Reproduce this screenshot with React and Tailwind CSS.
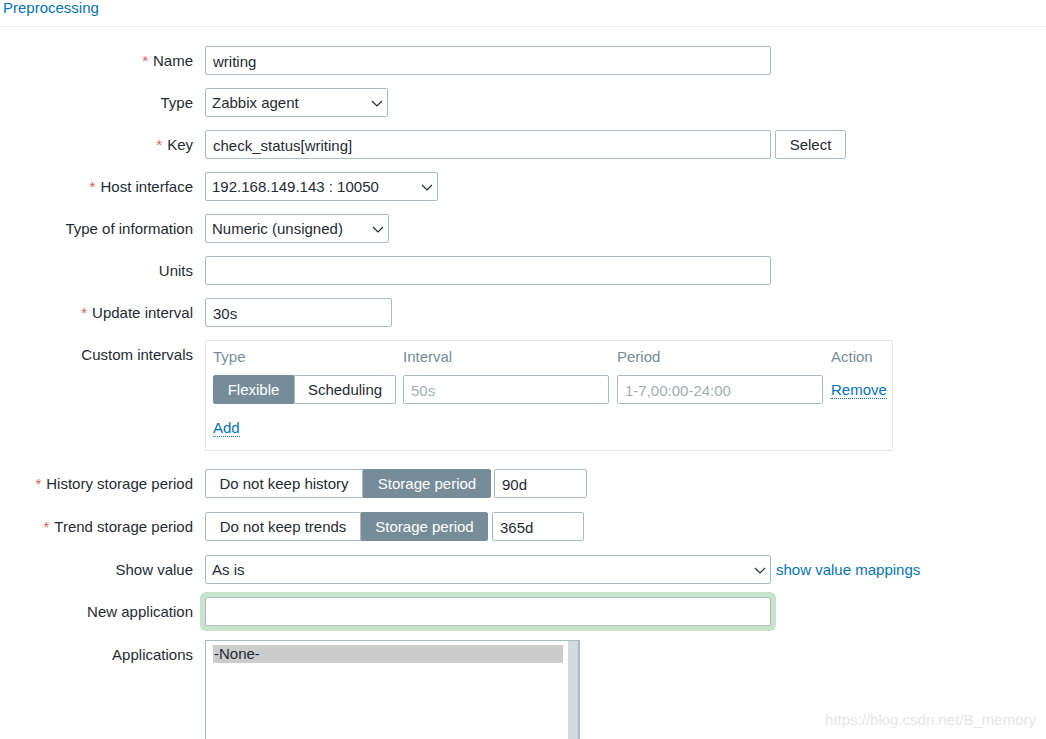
import clsx from 'clsx';

function Chevron() {
  return (
    <svg width="12" height="7" viewBox="0 0 12 7" className="shrink-0">
      <path d="M1 1l5 5 5-5" fill="none" stroke="#1f2c33" strokeWidth="1.2" />
    </svg>
  );
}

function Row({ label, required, className, children }) {
  return (
    <div className={clsx('flex items-start', className)}>
      <div className="w-[193px] shrink-0 text-right leading-[29px] whitespace-nowrap">
        {required && <span className="text-[#e45959] mr-[5px]">*</span>}
        {label}
      </div>
      <div className="ml-3 flex items-center">{children}</div>
    </div>
  );
}

function Input({ value, width, className }) {
  return (
    <div className={clsx('shrink-0 h-[29px] border border-[#acbbc2] rounded-[2px] bg-white px-[7px] leading-[29px] whitespace-nowrap', width, className)}>
      {value}
    </div>
  );
}

function Select({ value, width }) {
  return (
    <div className={clsx('shrink-0 h-[29px] border border-[#acbbc2] rounded-[2px] bg-white pl-[6px] pr-[4px] pt-px flex items-center justify-between', width)}>
      <span>{value}</span>
      <Chevron />
    </div>
  );
}

function Segmented({ items, active, widths }) {
  return (
    <div className="flex h-[29px] shrink-0">
      {items.map((it, i) => (
        <div
          key={it}
          className={clsx(
            'flex items-center justify-center border whitespace-nowrap pt-px',
            widths[i],
            i === 0 ? 'rounded-l-[2px]' : 'rounded-r-[2px]',
            i === active ? 'bg-[#768d99] border-[#768d99] text-white' : 'bg-white border-[#acbbc2] text-[#1f2c33]'
          )}
        >
          {it}
        </div>
      ))}
    </div>
  );
}

function Link({ children, className }) {
  return <span className={clsx('text-[#0275b8] border-b border-dotted border-[#0275b8] leading-[17px]', className)}>{children}</span>;
}

export default function App() {
  return (
    <div className="relative h-[739px] w-[1046px] overflow-hidden bg-white text-[15px] text-[#1f2c33] font-['Liberation_Sans',Arial,sans-serif]">
      <div className="h-[27px] border-b border-[#ebeef0] pl-[3px] leading-[16px] text-[#0275b8]">Preprocessing</div>

      <div className="pt-[19px] flex flex-col gap-[13px]">
        <Row label="Name" required>
          <Input value="writing" width="w-[566px]" />
        </Row>
        <Row label="Type">
          <Select value="Zabbix agent" width="w-[183px]" />
        </Row>
        <Row label="Key" required>
          <Input value="check_status[writing]" width="w-[566px]" />
          <div className="ml-1 h-[29px] w-[71px] pt-px border border-[#acbbc2] rounded-[2px] flex items-center justify-center">Select</div>
        </Row>
        <Row label="Host interface" required>
          <Select value="192.168.149.143 : 10050" width="w-[233px]" />
        </Row>
        <Row label="Type of information">
          <Select value="Numeric (unsigned)" width="w-[184px]" />
        </Row>
        <Row label="Units">
          <Input value="" width="w-[566px]" />
        </Row>
        <Row label="Update interval" required>
          <Input value="30s" width="w-[187px]" />
        </Row>
        <Row label="Custom intervals">
          <div className="w-[688px] h-[111px] border border-[#e3e8eb] pt-[7px] px-[7px]">
            <div className="flex leading-[18px] text-[#768d99]">
              <div className="w-[190px]">Type</div>
              <div className="w-[214px]">Interval</div>
              <div className="w-[214px]">Period</div>
              <div>Action</div>
            </div>
            <div className="mt-[9px] flex items-center">
              <Segmented items={['Flexible', 'Scheduling']} active={0} widths={['w-[81px]', 'w-[102px]']} />
              <Input value="50s" width="w-[206px]" className="ml-[7px] text-[#a3adb2]" />
              <Input value="1-7,00:00-24:00" width="w-[206px]" className="ml-2 text-[#a3adb2]" />
              <Link className="ml-2 mt-px whitespace-nowrap">Remove</Link>
            </div>
            <div className="mt-[13px]">
              <Link>Add</Link>
            </div>
          </div>
        </Row>
        <Row label="History storage period" required className="mt-[5px]">
          <Segmented items={['Do not keep history', 'Storage period']} active={1} widths={['w-[158px]', 'w-[128px]']} />
          <Input value="90d" width="w-[93px]" className="ml-[3px]" />
        </Row>
        <Row label="Trend storage period" required className="mt-px">
          <Segmented items={['Do not keep trends', 'Storage period']} active={1} widths={['w-[156px]', 'w-[127px]']} />
          <Input value="365d" width="w-[92px]" className="ml-1" />
        </Row>
        <Row label="Show value" className="mt-px">
          <Select value="As is" width="w-[566px]" />
          <span className="ml-[5px] mt-[2px] text-[#0275b8]">show value mappings</span>
        </Row>
        <Row label="New application">
          <Input value="" width="w-[566px]" className="shadow-[0_0_0_5px_#c6e4c9]" />
        </Row>
        <Row label="Applications" className="mt-px">
          <div className="w-[375px] h-[140px] border border-[#acbbc2] border-r-0 flex">
            <div className="flex-1 pt-1 pl-[7px] pr-[5px]">
              <div className="bg-[#cccccc] leading-[18px] pl-[1px]">-None-</div>
            </div>
            <div className="w-[12px] bg-[#d2dadf] border-r-2 border-[#acbbc2]" />
          </div>
        </Row>
      </div>

      <div className="absolute right-[10px] bottom-[10px] text-[15px] leading-[18px] text-[#e6e6e6]">https://blog.csdn.net/B_memory</div>
    </div>
  );
}
